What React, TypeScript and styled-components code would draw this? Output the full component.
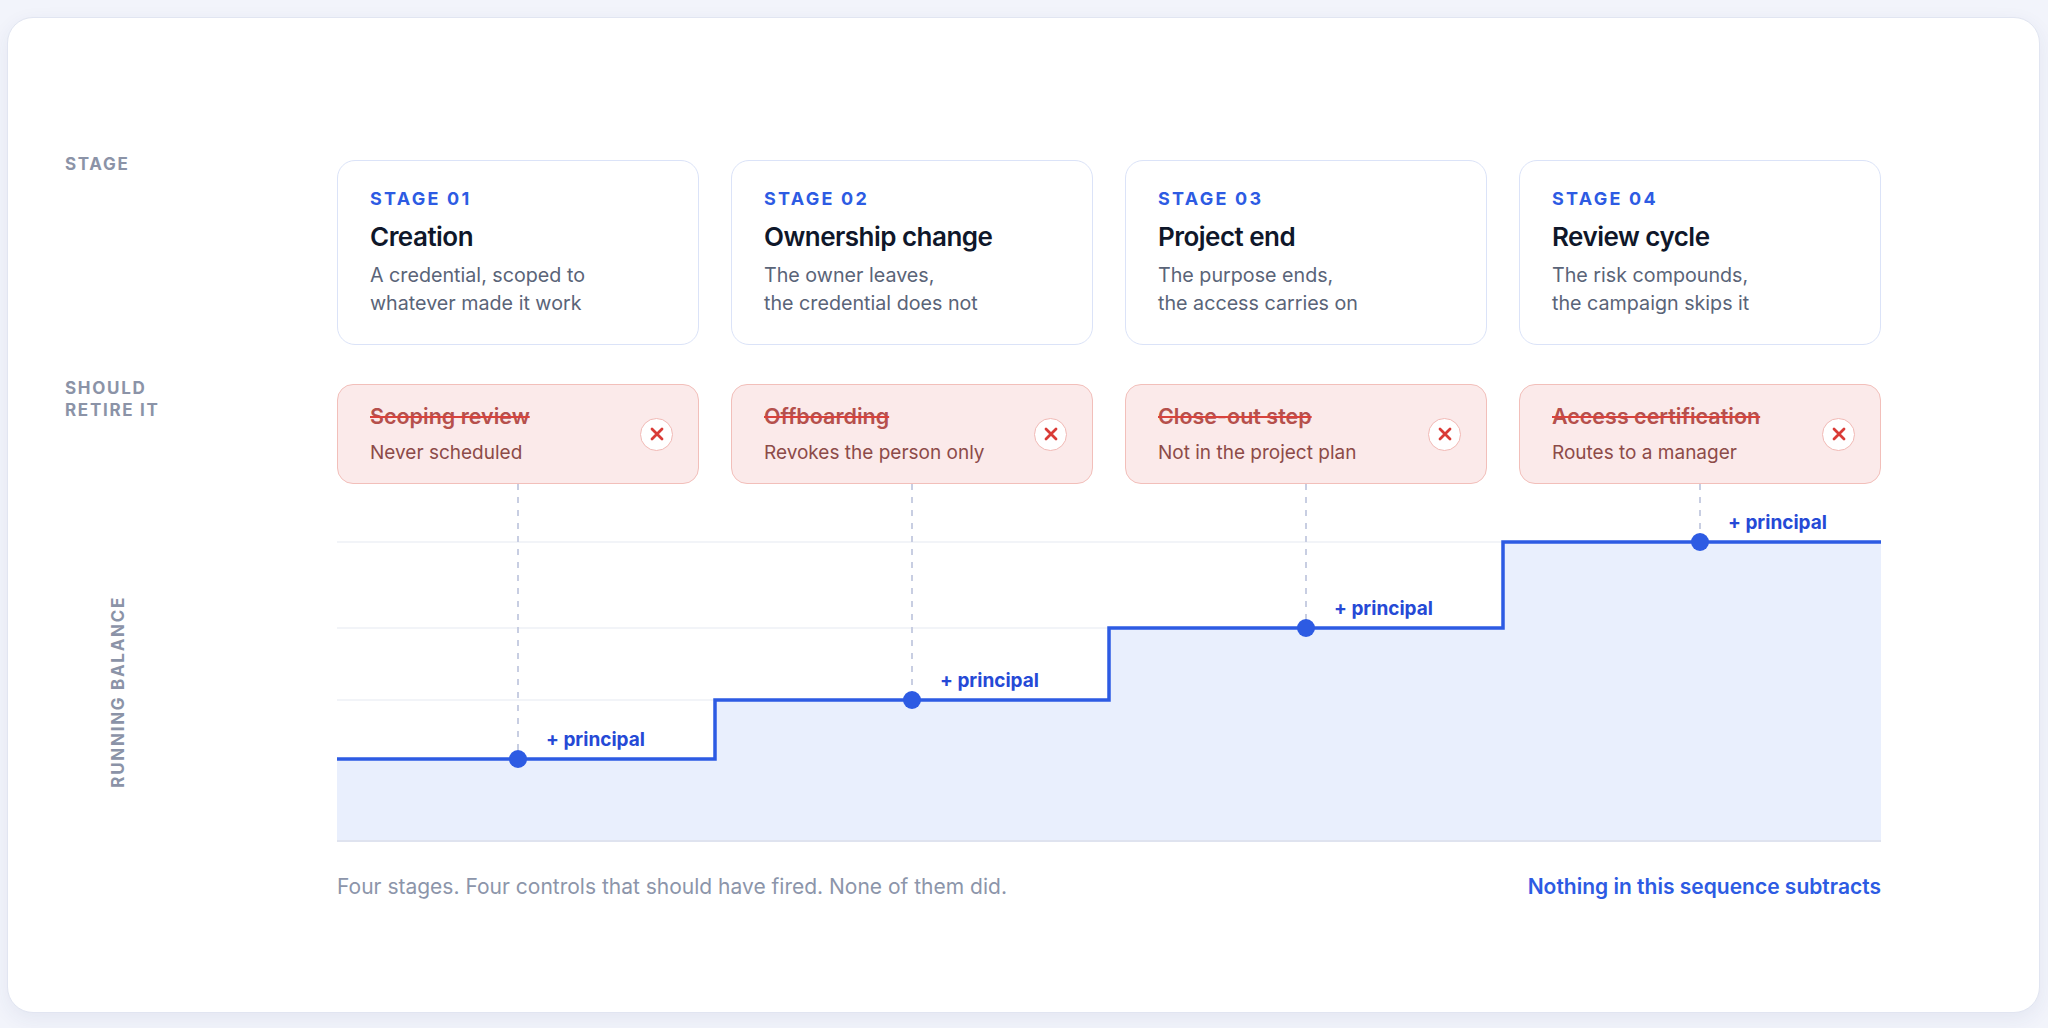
import React from "react";
import styled, { createGlobalStyle } from "styled-components";

const GlobalStyle = createGlobalStyle`
  html, body { margin: 0; padding: 0; background: #f2f4fb; }
  body { font-family: Inter, "Noto Sans", "Liberation Sans", sans-serif; -webkit-font-smoothing: antialiased; }
  * { box-sizing: border-box; }
`;

const Page = styled.div`
  height: 100vh;
  padding: 17px 8px 15px 7px;
  display: flex;
`;

const Panel = styled.section`
  flex: 1;
  background: #ffffff;
  border: 1px solid #e1e5f1;
  border-radius: 26px;
  box-shadow: 0 6px 20px rgba(40, 55, 120, 0.07);
  padding: 142px 158px 0 57px;
`;

const Row = styled.div<{ $mt?: number }>`
  display: grid;
  grid-template-columns: 240px repeat(4, 1fr);
  column-gap: 32px;
  margin-top: ${(p) => p.$mt ?? 0}px;
`;

const RowLabel = styled.div`
  margin-top: -7px;
  font-size: 17px;
  line-height: 22px;
  font-weight: 700;
  letter-spacing: 0.1em;
  color: #8b93a7;
  text-transform: uppercase;
`;

const StageCard = styled.div`
  border: 1.5px solid #dbe3f8;
  border-radius: 18px;
  padding: 27px 32px 27px 32px;
  display: flex;
  flex-direction: column;
  background: #fff;
`;

const StageNum = styled.div`
  font-size: 18px;
  line-height: 22px;
  font-weight: 700;
  letter-spacing: 0.125em;
  color: #2d5be3;
`;

const StageTitle = styled.div`
  margin-top: 11px;
  font-size: 26px;
  line-height: 32px;
  font-weight: 600;
  letter-spacing: -0.02em;
  color: #0f172a;
`;

const StageBody = styled.div`
  margin-top: 8px;
  font-size: 19.7px;
  line-height: 28px;
  color: #5a6478;
  white-space: pre-line;
`;

const ControlCard = styled.div`
  height: 100px;
  border: 1.5px solid #f2bfba;
  border-radius: 16px;
  background: #fbeaea;
  display: flex;
  align-items: center;
  justify-content: space-between;
  padding: 0 25px 0 32px;
`;

const ControlText = styled.div`
  display: flex;
  flex-direction: column;
  gap: 11px;
`;

const ControlTitle = styled.div`
  font-size: 21.5px;
  line-height: 26px;
  font-weight: 600;
  color: #b5504c;
  text-decoration: line-through;
  text-decoration-color: #d9423d;
  text-decoration-thickness: 2px;
`;

const ControlSub = styled.div`
  font-size: 19px;
  line-height: 26px;
  color: #8d4b48;
`;

const FailBadge = styled.div`
  width: 33px;
  height: 33px;
  border-radius: 50%;
  background: #ffffff;
  border: 1.5px solid #f1b9b5;
  display: flex;
  align-items: center;
  justify-content: center;
  flex-shrink: 0;
`;

const AxisCell = styled.div`
  padding-top: 58px;
  padding-left: 42px;
  display: flex;
  align-items: center;
`;

const AxisLabel = styled.div`
  writing-mode: vertical-rl;
  transform: rotate(180deg);
  font-size: 17px;
  line-height: 22px;
  font-weight: 700;
  letter-spacing: 0.1em;
  color: #8b93a7;
  white-space: nowrap;
`;

const ChartCell = styled.div`
  grid-column: 2 / span 4;
  height: 358px;
`;

const ChartSvg = styled.svg`
  display: block;
  width: 100%;
  height: 100%;
  overflow: visible;
`;

const Footer = styled.div`
  grid-column: 2 / span 4;
  display: flex;
  justify-content: space-between;
  align-items: baseline;
  font-size: 21px;
  line-height: 26px;
`;

const FooterNote = styled.span`
  color: #8c95aa;
`;

const FooterEmph = styled.span`
  color: #2d5be3;
  font-weight: 600;
`;

const stages = [
  { num: "STAGE 01", title: "Creation", body: "A credential, scoped to\nwhatever made it work" },
  { num: "STAGE 02", title: "Ownership change", body: "The owner leaves,\nthe credential does not" },
  { num: "STAGE 03", title: "Project end", body: "The purpose ends,\nthe access carries on" },
  { num: "STAGE 04", title: "Review cycle", body: "The risk compounds,\nthe campaign skips it" },
];

const controls = [
  { title: "Scoping review", sub: "Never scheduled" },
  { title: "Offboarding", sub: "Revokes the person only" },
  { title: "Close-out step", sub: "Not in the project plan" },
  { title: "Access certification", sub: "Routes to a manager" },
];

const XIcon = () => (
  <svg width="14" height="14" viewBox="0 0 14 14" aria-hidden="true">
    <path d="M2 2 L12 12 M12 2 L2 12" stroke="#d93b36" strokeWidth="2.8" strokeLinecap="round" />
  </svg>
);

const W = 1544;
const H = 358;
const centers = [181, 575, 969, 1363];
const steps = [378, 772, 1166];
const levels = [275, 216, 144, 58];

const linePath = `M0 ${levels[0]} H${steps[0]} V${levels[1]} H${steps[1]} V${levels[2]} H${steps[2]} V${levels[3]} H${W}`;
const fillPath = `${linePath} V${H} H0 Z`;

const Chart = () => (
  <ChartSvg viewBox={`0 0 ${W} ${H}`} preserveAspectRatio="none">
    {[58, 144, 216].map((y) => (
      <line key={y} x1={0} x2={W} y1={y} y2={y} stroke="#eef0f6" strokeWidth={1.5} />
    ))}
    <path d={fillPath} fill="#e9effd" />
    <line x1={0} x2={W} y1={H - 1} y2={H - 1} stroke="#dfe3ef" strokeWidth={2} />
    {centers.map((x, i) => (
      <line key={x} x1={x} x2={x} y1={0} y2={levels[i]} stroke="#c8cee2" strokeWidth={2} strokeDasharray="6 7" />
    ))}
    <path d={linePath} fill="none" stroke="#2d5be3" strokeWidth={3.5} strokeLinejoin="miter" />
    {centers.map((x, i) => (
      <g key={`d${x}`}>
        <circle cx={x} cy={levels[i]} r={9} fill="#2d5be3" />
        <text
          x={x + 28}
          y={levels[i] - 13}
          fontFamily="Inter, 'Noto Sans', sans-serif"
          fontSize={19}
          fontWeight={700}
          fill="#2549d6"
        >
          + principal
        </text>
      </g>
    ))}
  </ChartSvg>
);

export default function App() {
  return (
    <>
      <GlobalStyle />
      <Page>
        <Panel>
          <Row>
            <RowLabel>Stage</RowLabel>
            {stages.map((s) => (
              <StageCard key={s.num}>
                <StageNum>{s.num}</StageNum>
                <StageTitle>{s.title}</StageTitle>
                <StageBody>{s.body}</StageBody>
              </StageCard>
            ))}
          </Row>
          <Row $mt={39}>
            <RowLabel>
              Should
              <br />
              retire it
            </RowLabel>
            {controls.map((c) => (
              <ControlCard key={c.title}>
                <ControlText>
                  <ControlTitle>{c.title}</ControlTitle>
                  <ControlSub>{c.sub}</ControlSub>
                </ControlText>
                <FailBadge>
                  <XIcon />
                </FailBadge>
              </ControlCard>
            ))}
          </Row>
          <Row>
            <AxisCell>
              <AxisLabel>RUNNING BALANCE</AxisLabel>
            </AxisCell>
            <ChartCell>
              <Chart />
            </ChartCell>
          </Row>
          <Row $mt={32}>
            <Footer>
              <FooterNote>Four stages. Four controls that should have fired. None of them did.</FooterNote>
              <FooterEmph>Nothing in this sequence subtracts</FooterEmph>
            </Footer>
          </Row>
        </Panel>
      </Page>
    </>
  );
}
